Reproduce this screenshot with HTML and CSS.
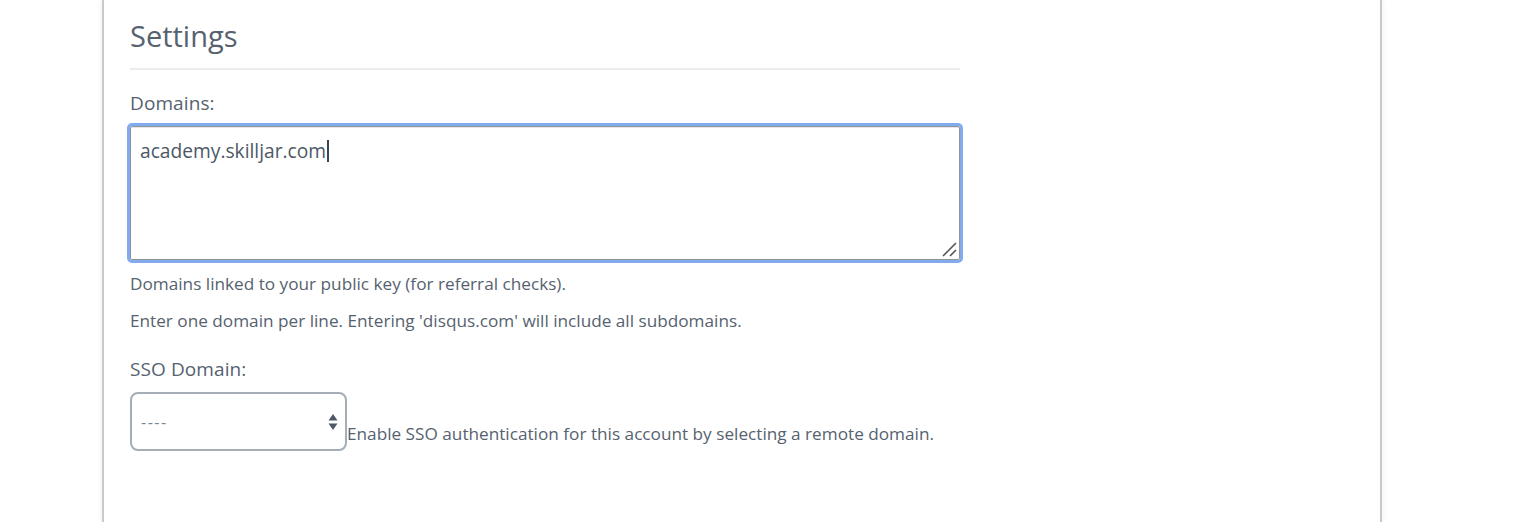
FILE: index.html
```html
<!DOCTYPE html>
<html>
<head>
<meta charset="utf-8">
<link rel="stylesheet" href="styles.css">
</head>
<body>
<div class="page">
  <div class="panel">
    <form class="settings">
      <h2 class="title">Settings</h2>
      <div class="field">
        <label class="label">Domains:</label>
        <div class="textarea">
          <span class="value">academy.skilljar.com</span><span class="caret"></span>
          <svg class="grip" width="16" height="16" viewBox="0 0 16 16"><path d="M15 2 L2 15 M15 9 L9 15" stroke="#555" stroke-width="1.6" fill="none"/></svg>
        </div>
        <p class="help first">Domains linked to your public key (for referral checks).</p>
        <p class="help">Enter one domain per line. Entering 'disqus.com' will include all subdomains.</p>
      </div>
      <div class="field sso">
        <label class="label">SSO Domain:</label>
        <div class="row">
          <div class="select">
            <span class="option">----</span>
            <svg class="arrows" width="10" height="18" viewBox="0 0 10 18"><path d="M5 1 L9.5 7.5 L0.5 7.5 Z M0.5 10.5 L9.5 10.5 L5 17 Z" fill="#4c5866"/></svg>
          </div>
          <span class="inline-help">Enable SSO authentication for this account by selecting a remote domain.</span>
        </div>
      </div>
    </form>
  </div>
</div>
</body>
</html>
```
FILE: styles.css
```css
html, body {
  margin: 0;
  padding: 0;
  background: #ffffff;
}
body {
  font-family: "Open Sans", "Noto Sans", sans-serif;
  color: #505c6b;
}
.page {
  height: 522px;
  overflow: hidden;
  padding-left: 102px;
}
.panel {
  width: 1250px;
  height: 522px;
  border-left: 2px solid #c9c9c9;
  border-right: 2px solid #c9c9c9;
  box-shadow: -3px 0 4px rgba(0,0,0,0.03), 3px 0 4px rgba(0,0,0,0.03);
  padding-left: 26px;
  box-sizing: content-box;
}
.settings {
  width: 830px;
}
.title {
  margin: 0;
  padding-top: 18px;
  font-size: 29px;
  font-weight: 400;
  line-height: 36px;
  color: #56626f;
  padding-bottom: 14px;
  border-bottom: 2px solid #ececec;
}
.label {
  display: block;
  font-size: 19px;
  line-height: 22px;
  margin-top: 22px;
  color: #56626f;
  letter-spacing: 0.1px;
}
.textarea {
  position: relative;
  margin-top: 12px;
  height: 134px;
  border: 1px solid #8f959c;
  box-shadow: inset 0 1px 0 #e6e6e6;
  outline: 3px solid #82abee;
  outline-offset: 0;
  border-radius: 2px;
  padding: 13px 9px;
  box-sizing: border-box;
  font-size: 19.2px;
  line-height: 22px;
  color: #4c5866;
}
.caret {
  display: inline-block;
  width: 2px;
  height: 22px;
  background: #3a4654;
  vertical-align: top;
  margin-left: 1px;
}
.grip {
  position: absolute;
  right: 2px;
  bottom: 2px;
}
.help {
  margin: 0;
  font-size: 17.2px;
  line-height: 22px;
  color: #56626f;
}
.help.first {
  margin-top: 13px;
}
.help + .help {
  margin-top: 15px;
}
.sso .label {
  margin-top: 26px;
}
.row {
  margin-top: 12px;
  display: flex;
  align-items: flex-end;
}
.select {
  position: relative;
  width: 217px;
  height: 59px;
  border: 2px solid #a5adb7;
  border-radius: 8px;
  box-sizing: border-box;
  display: flex;
  align-items: center;
  padding-left: 9px;
  flex: none;
}
.option {
  font-size: 16px;
  color: #7b858f;
  letter-spacing: 1.5px;
}
.arrows {
  position: absolute;
  right: 7px;
  top: 19px;
}
.inline-help {
  font-size: 17.2px;
  line-height: 22px;
  color: #56626f;
  margin-bottom: 6px;
}
```
